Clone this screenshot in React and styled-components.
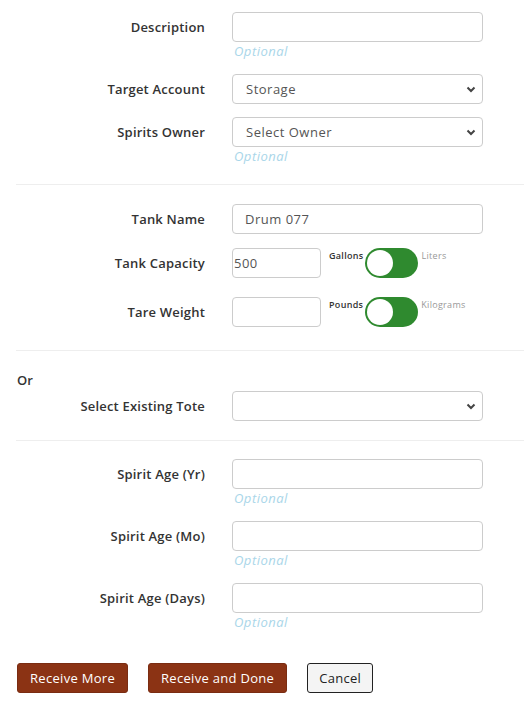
import React from "react";
import styled, { createGlobalStyle } from "styled-components";

const GlobalStyle = createGlobalStyle`
  body {
    margin: 0;
    background: #fff;
    font-family: "Open Sans", "Liberation Sans", sans-serif;
    color: #333;
  }
`;

const Page = styled.div`
  padding: 12px 0 16px 16px;
`;

const Row = styled.div`
  display: grid;
  grid-template-columns: 189px 251px;
  column-gap: 27px;
  align-items: start;
  margin-bottom: ${(p) => p.$mb ?? 14}px;
`;

const Label = styled.label`
  text-align: right;
  font-size: 13px;
  font-weight: 600;
  letter-spacing: 0.2px;
  color: #333;
  line-height: 30px;
  height: 30px;
`;

const Field = styled.div`
  display: flex;
  flex-direction: column;
`;

const Input = styled.input`
  box-sizing: border-box;
  width: ${(p) => p.$w || "251px"};
  height: 30px;
  border: 1px solid #ccc;
  border-radius: 4px;
  padding: 0 ${(p) => (p.$tight ? 1 : 12)}px;
  font-family: inherit;
  font-size: 13px;
  letter-spacing: 0.5px;
  color: #555;
  outline: none;
`;

const SelectWrap = styled.div`
  position: relative;
  width: 251px;
  height: 30px;
`;

const Select = styled.select`
  appearance: none;
  box-sizing: border-box;
  width: 100%;
  height: 30px;
  border: 1px solid #ccc;
  border-radius: 4px;
  background: #fff;
  padding: 0 13px;
  font-family: inherit;
  font-size: 13px;
  letter-spacing: 0.5px;
  color: #555;
  outline: none;
`;

const Chevron = styled.svg`
  position: absolute;
  right: 7px;
  top: 12px;
  pointer-events: none;
`;

const Hint = styled.div`
  font-size: 13px;
  font-style: italic;
  letter-spacing: 0.5px;
  color: #a9d6e9;
  padding-left: 2px;
  line-height: 18px;
`;

const Divider = styled.hr`
  border: 0;
  border-top: 1px solid #eee;
  margin: ${(p) => p.$m || "19px 0 18px"};
`;

const UnitRow = styled.div`
  display: flex;
  align-items: flex-start;
  gap: 8px;
`;

const Toggle = styled.div`
  display: flex;
  align-items: flex-start;
`;

const UnitText = styled.span`
  font-size: 9px;
  font-weight: ${(p) => (p.$on ? 600 : 400)};
  letter-spacing: 0.3px;
  color: ${(p) => (p.$on ? "#333" : "#999")};
  margin-top: 1px;
`;

const Track = styled.div`
  width: 53px;
  height: 30px;
  border-radius: 15px;
  background: #2f8a2f;
  margin: 0 3px 0 2px;
  display: flex;
  align-items: center;
  padding-left: 2px;
  box-sizing: border-box;
`;

const Knob = styled.div`
  width: 26px;
  height: 26px;
  border-radius: 50%;
  background: #fff;
`;

const OrText = styled.div`
  font-size: 13px;
  font-weight: 600;
  margin: 20px 0 2px 1px;
`;

const Actions = styled.div`
  display: flex;
  gap: 20px;
  margin-top: 32px;
  padding-left: 1px;
`;

const Button = styled.button`
  height: 30px;
  padding: 0 ${(p) => (p.$secondary ? 11 : 12)}px;
  border-radius: 3px;
  font-family: inherit;
  font-size: 13px;
  letter-spacing: 0.3px;
  border: 1px solid ${(p) => (p.$secondary ? "#222" : "#7a2c12")};
  background: ${(p) => (p.$secondary ? "#f4f4f4" : "#8b3314")};
  color: ${(p) => (p.$secondary ? "#222" : "#fff")};
`;

const Dropdown = ({ value, children }) => (
  <SelectWrap>
    <Select defaultValue={value}>{children}</Select>
    <Chevron width="10" height="7" viewBox="0 0 10 7">
      <path d="M1.5 1.5 L5 5 L8.5 1.5" fill="none" stroke="#444" strokeWidth="2" />
    </Chevron>
  </SelectWrap>
);

const UnitToggle = ({ on, off }) => (
  <Toggle>
    <UnitText $on>{on}</UnitText>
    <Track>
      <Knob />
    </Track>
    <UnitText>{off}</UnitText>
  </Toggle>
);

export default function App() {
  return (
    <Page>
      <GlobalStyle />
      <Row $mb={14}>
        <Label>Description</Label>
        <Field>
          <Input />
          <Hint>Optional</Hint>
        </Field>
      </Row>
      <Row $mb={13}>
        <Label>Target Account</Label>
        <Dropdown value="storage">
          <option value="storage">Storage</option>
        </Dropdown>
      </Row>
      <Row $mb={0}>
        <Label>Spirits Owner</Label>
        <Field>
          <Dropdown value="">
            <option value="">Select Owner</option>
          </Dropdown>
          <Hint>Optional</Hint>
        </Field>
      </Row>

      <Divider $m="19px 0 19px" />

      <Row>
        <Label>Tank Name</Label>
        <Input defaultValue="Drum 077" />
      </Row>
      <Row $mb={19}>
        <Label>Tank Capacity</Label>
        <UnitRow>
          <Input $w="89px" $tight defaultValue="500" />
          <UnitToggle on="Gallons" off="Liters" />
        </UnitRow>
      </Row>
      <Row $mb={0}>
        <Label>Tare Weight</Label>
        <UnitRow>
          <Input $w="89px" $tight />
          <UnitToggle on="Pounds" off="Kilograms" />
        </UnitRow>
      </Row>

      <Divider $m="23px 0 0" />

      <OrText>Or</OrText>
      <Row $mb={0}>
        <Label>Select Existing Tote</Label>
        <Dropdown value="">
          <option value=""></option>
        </Dropdown>
      </Row>

      <Divider />

      <Row>
        <Label>Spirit Age (Yr)</Label>
        <Field>
          <Input />
          <Hint>Optional</Hint>
        </Field>
      </Row>
      <Row>
        <Label>Spirit Age (Mo)</Label>
        <Field>
          <Input />
          <Hint>Optional</Hint>
        </Field>
      </Row>
      <Row $mb={0}>
        <Label>Spirit Age (Days)</Label>
        <Field>
          <Input />
          <Hint>Optional</Hint>
        </Field>
      </Row>

      <Actions>
        <Button>Receive More</Button>
        <Button>Receive and Done</Button>
        <Button $secondary>Cancel</Button>
      </Actions>
    </Page>
  );
}
